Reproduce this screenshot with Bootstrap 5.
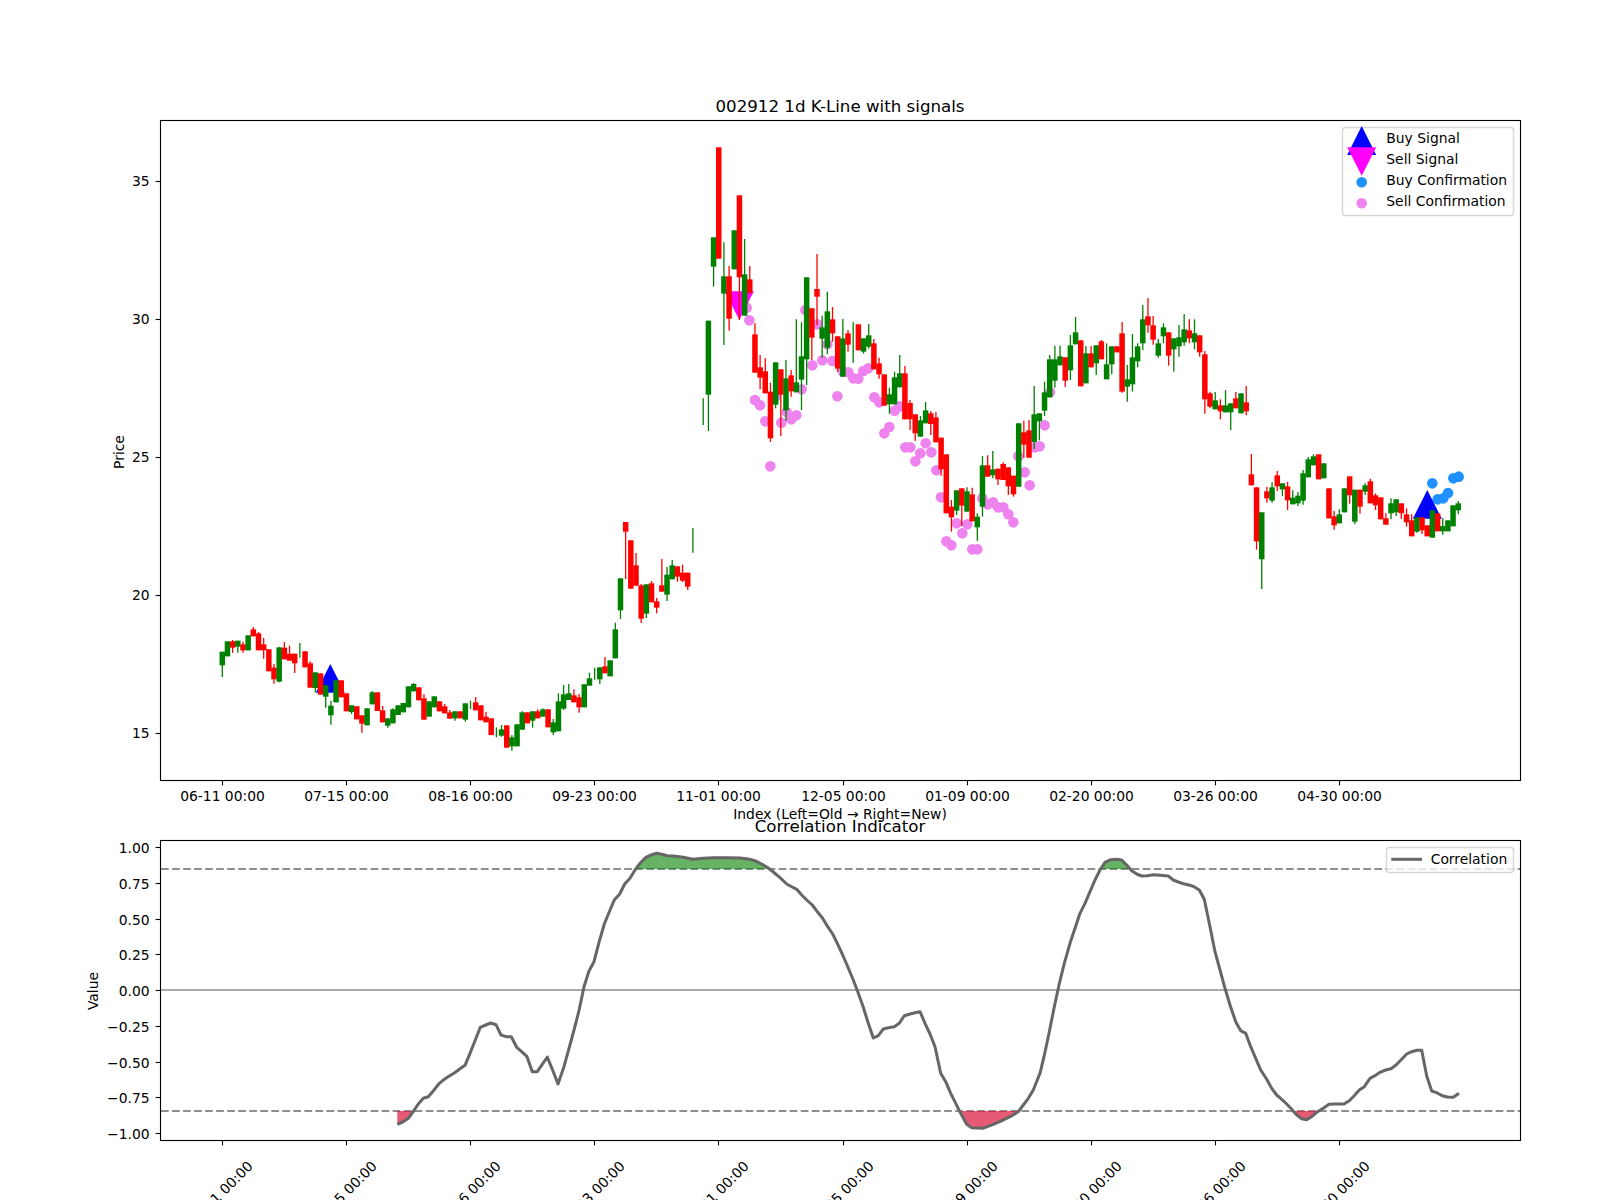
<!DOCTYPE html>
<html lang="en">
<head>
<meta charset="utf-8">
<title>002912 1d K-Line with signals</title>
<link href="https://cdn.jsdelivr.net/npm/bootstrap@5.3.0/dist/css/bootstrap.min.css" rel="stylesheet">
<style>
body { background: #fff; overflow: hidden; }
.chart-figure { width: 1600px; height: 1200px; }
.chart-figure text { font-family: "DejaVu Sans", sans-serif; font-size: 13.89px; fill: #000; }
.chart-figure text.plot-title { font-size: 16.67px; }
.ax-frame { fill: none; stroke: #000; stroke-width: 1.11; }
.ax-tick { stroke: #000; stroke-width: 1.11; }
.legend-box { fill: #fff; fill-opacity: .8; stroke: #ccc; stroke-opacity: .8; stroke-width: 1.39; }
.corr-line { fill: none; stroke: #666; stroke-width: 3; stroke-linejoin: round; }
.dash-line { stroke: #8e8e8e; stroke-width: 2.08; stroke-dasharray: 7.7 3.33; }
.zero-line { stroke: #aaa; stroke-width: 2.08; }
.tri-buy { fill: #00f; }
.tri-sell { fill: #f0f; }
.dot-buy { fill: #1e90ff; }
.dot-sell { fill: #ee82ee; }
.fill-up { fill: rgba(0,128,0,.6); }
.fill-down { fill: rgba(220,20,60,.7); }
</style>
</head>
<body>
<main class="container-fluid p-0">
<svg class="chart-figure d-block" viewBox="0 0 1600 1200" xmlns="http://www.w3.org/2000/svg">
  <defs>
    <clipPath id="clipUp"><rect x="160" y="840" width="1360" height="29"/></clipPath>
    <clipPath id="clipDown"><rect x="160" y="1111" width="1360" height="29"/></clipPath>
  </defs>
  <rect width="1600" height="1200" fill="#fff"/>

  <text class="plot-title" x="840" y="112" text-anchor="middle">002912 1d K-Line with signals</text>
  <g id="confirmDots"></g>
  <polygon class="tri-buy" points="330.3,664 315.8,692.7 344.8,692.7"/>
  <polygon class="tri-buy" points="1427.3,490 1412.8,518.7 1441.8,518.7"/>
  <polygon class="tri-sell" points="739.3,320 724.8,291.3 753.8,291.3"/>
  <g id="candles"></g>
  <rect class="ax-frame" x="160.5" y="120.5" width="1360" height="660"/>
  <g id="axisOne"></g>

  <rect class="legend-box" x="1342.5" y="127.5" width="171" height="88" rx="3"/>
  <polygon class="tri-buy" points="1361.7,126 1347.2,155 1376.2,155"/>
  <polygon class="tri-sell" points="1361.7,175.7 1347.2,147.3 1376.2,147.3"/>
  <circle class="dot-buy" cx="1361.7" cy="182.3" r="5.3"/>
  <circle class="dot-sell" cx="1361.7" cy="203.3" r="5.3"/>
  <text x="1386.3" y="143.3">Buy Signal</text>
  <text x="1386.3" y="164.3">Sell Signal</text>
  <text x="1386.3" y="185.3">Buy Confirmation</text>
  <text x="1386.3" y="206.3">Sell Confirmation</text>

  <text x="124" y="452" text-anchor="middle" transform="rotate(-90 124 452)">Price</text>
  <text x="840" y="819.3" text-anchor="middle">Index (Left=Old → Right=New)</text>
  <text class="plot-title" x="840" y="831.7" text-anchor="middle">Correlation Indicator</text>

  <line class="dash-line" x1="161" y1="869" x2="1520" y2="869"/>
  <line class="dash-line" x1="161" y1="1111" x2="1520" y2="1111"/>
  <line class="zero-line" x1="161" y1="990" x2="1520" y2="990"/>
  <polygon id="fillUp" class="fill-up" clip-path="url(#clipUp)"/>
  <polygon id="fillDown" class="fill-down" clip-path="url(#clipDown)"/>
  <polyline id="corrCurve" class="corr-line"/>
  <rect class="ax-frame" x="160.5" y="840.5" width="1360" height="300"/>
  <g id="axisTwo"></g>

  <rect class="legend-box" x="1386.5" y="847.5" width="127" height="25" rx="3"/>
  <line class="corr-line" x1="1391.3" y1="859.3" x2="1422" y2="859.3"/>
  <text x="1430.7" y="864.3">Correlation</text>
  <text x="98" y="991" text-anchor="middle" transform="rotate(-90 98 991)">Value</text>
</svg>
</main>
<script src="https://cdn.jsdelivr.net/npm/bootstrap@5.3.0/dist/js/bootstrap.bundle.min.js"></script>
<script>
(function () {
  var N = 'http://www.w3.org/2000/svg';
  function el(parent, tag, attrs, txt) {
    var e = document.createElementNS(N, tag);
    for (var k in attrs) e.setAttribute(k, attrs[k]);
    if (txt) e.textContent = txt;
    parent.appendChild(e);
    return e;
  }
  var G = '#008000', R = '#ff0000';
  var sets = [
   [150,500,[[216,G,455,496,0,531],[231,G,424,469],[246,R,424,443,420,459],[262,G,422,440,0,458],[278,R,433,451,425,458],[293,G,406,451],[309,R,388,409,381],[324,R,400,451,396],[340,R,433,451,414,476],[355,R,448,514],[371,R,503,538,492,551],[387,G,442,545,0,547],[402,R,443,478,426],[417,R,461,482,437],[432,R,461,490,0,519],[448,G,null,null,429,473],[464,R,454,502],[480,R,490,563,484],[495,G,517,564,0,577],[510,R,520,584],[525,G,556,590,0,623],[541,G,617,646,603,674],[557,G,541,607],[572,R,541,592],[588,R,580,634],[603,G,616,636,0,642],[618,R,619,658],[634,R,646,671,0,698],[650,G,625,676],[665,G,577,613,573],[681,R,577,633],[696,R,631,667,618],[711,G,655,677,0,683],[728,G,628,670,625],[743,G,616,645],[758,G,609,637],[774,G,559,622],[789,G,552,574,549],[804,R,562,601],[821,R,595,659,583],[836,G,604,650],[852,G,589,622],[867,R,604,634],[882,R,619,640,612],[897,R,637,656,630],[914,G,634,655,0,662],[929,R,634,655],[945,G,610,659,0,665],[961,G,null,null,602,627],[975,R,607,631,591],[990,R,616,661],[1006,R,650,667,636],[1022,R,655,705,0,706],[1039,G,null,null,682,712],[1052,G,688,707,675,710],[1068,R,676,743],[1086,G,712,739,705,752],[1101,G,673,739],[1115,G,637,689,634],[1131,R,637,670],[1146,G,634,662,0,683],[1160,R,634,655,628],[1178,G,628,650,625],[1192,R,628,682]]],
   [540,620,[[38,G,307,337,297,345],[53,G,244,334,220],[69,G,223,266,195,270],[85,G,220,240,192],[101,R,226,247,208],[116,R,232,262,222,278],[132,G,193,262],[148,G,175,197,158],[163,G,null,null,143,179],[177,G,142,178,0,192],[193,R,139,160,111],[209,G,121,169],[225,G,28,115,8]]],
   [500,480,[[360,G,295,391,0,417],[375,R,126,155,0,297],[390,R,181,326],[407,R,256,317,219],[423,R,316,416,312,429],[438,G,313,401,0,414],[453,R,310,367,303],[468,R,364,383,354,400],[485,R,316,335,237],[500,G,284,344,261,363],[516,G,256,298,240],[531,R,259,290,0,305],[546,R,278,302,254,306],[561,R,278,320,0,330],[579,G,null,null,144,218]]],
   [550,110,[[460,G,null,null,865,945],[474,G,632,854,0,963],[489,G,382,470,0,530],[504,R,112,446],[521,G,499,551,397,705],[536,R,499,626,468,662],[551,G,361,478],[567,R,256,502,0,630],[582,G,493,617,387],[597,R,508,549,468],[615,R,673,788,640],[631,R,772,803,735,838],[646,R,784,850,745],[660,R,845,985,818,996],[675,G,757,884,0,895],[692,R,778,854,0,978],[708,G,805,901,750,932],[723,R,796,844,780,860],[738,G,817,847,628],[753,G,739,809,637,900],[768,G,502,748,0,825],[786,R,595,683,0,750],[802,R,537,560,432,645],[816,G,652,686,617,743],[831,G,604,713,545,732],[846,R,628,670,591,695],[861,R,679,776,0,785],[878,G,685,800,627],[894,R,670,704,660,725],[910,G,null,null,636,758],[923,R,643,721],[938,G,685,725,0,731],[954,G,676,710,642,716],[971,R,700,778,687],[987,R,760,793,743,806],[1002,R,793,887],[1018,G,853,883,833,911],[1032,G,802,883,785],[1047,G,790,832,735]]],
   [720,280,[[555,R,280,418,258],[570,R,369,418,360,450],[585,R,403,460,0,483],[600,G,421,470,408],[615,G,391,430,366],[633,R,400,432,393,465],[647,R,412,487,396],[662,R,473,568,0,587],[678,R,523,700],[693,R,680,712,660,755],[708,G,631,692,0,705],[726,R,625,677,0,738],[740,G,634,695,622],[756,R,643,724,623],[771,G,710,742,700,782],[786,G,556,680,528,710],[801,R,556,590,526],[819,G,568,586,513,595],[834,R,566,598,0,615],[849,R,552,600,547],[864,R,562,619,0,645],[879,R,587,643,0,650],[894,G,430,620],[911,R,457,494,422,533],[926,R,451,533,420],[941,G,403,486,318,507],[957,G,400,424,0,481],[973,G,337,392,305,408],[990,G,238,352,225],[1005,G,238,302,197,323],[1020,G,229,256,197],[1035,R,232,302,0,321],[1050,G,196,271,165,300],[1065,G,157,193,111],[1082,R,181,319],[1098,G,220,310,198],[1113,R,220,262,198],[1128,G,196,250,0,285],[1143,R,184,238,180],[1159,G,253,298,190],[1174,G,199,253,0,283]]],
   [1100,110,[[50,R,709,727],[66,R,670,845,636,848],[80,G,808,830,765,875],[95,G,742,823,672,845],[110,G,709,754,700,772],[129,G,628,700,585,720],[144,R,619,646,564,668],[159,R,646,689,618,704],[174,G,700,737,686,743],[189,G,652,679,640,700],[204,R,667,737,0,767],[222,G,685,718,0,785],[237,G,682,709,645,740],[252,G,658,697,612,707],[267,R,661,685,628,700],[282,G,670,697,628,718],[300,R,676,727,0,740],[315,R,733,868,723,911],[330,R,850,890,845,895],[345,G,871,898,846],[360,R,886,904,868,928],[375,G,886,907,840],[393,G,880,907,0,960],[408,R,865,895,846],[423,G,850,910],[438,R,877,904,828,916]]],
   [1200,430,[[153,R,133,166,72],[168,R,172,334,0,359],[186,G,247,388,0,477],[201,R,184,205,170,218],[216,G,172,212,157,218],[231,R,136,169,123,183],[246,G,160,178,0,198],[261,R,169,211,156,240],[278,G,203,223,181],[294,G,197,220,186,228],[309,G,130,212,120,224],[324,G,88,142,81],[339,G,79,106,73],[357,R,73,148],[372,G,100,145],[387,R,175,265],[402,R,259,286,243,299],[417,G,253,280,238],[432,G,175,247],[450,R,139,196,0,221],[465,G,179,275,0,282],[480,R,179,230,0,251],[495,G,166,185,160,195],[510,R,154,220,146],[525,R,196,226,190,240],[543,R,202,268],[558,R,265,284,250],[573,G,220,250,205,268],[588,G,208,247,0,258],[603,R,220,250,0,267],[618,R,253,277,235,290],[636,R,271,319,253],[651,G,262,305,0,308],[666,R,262,301,0,312],[681,R,286,319],[696,G,241,323],[711,R,250,304],[729,G,288,304,265,314],[744,G,271,304],[759,G,226,289],[774,G,220,241,213,253]]]
  ];
  var STEP = 5.1713;
  var cg = document.getElementById('candles');
  sets.forEach(function (s) {
    s[2].forEach(function (b) {
      var rx = s[0] + b[0] / 3;
      var i = Math.round((rx - 222.3) / STEP);
      var x = 222.3 + i * STEP;
      function y(v) { return s[1] + v / 3; }
      var hasBody = b[2] !== null;
      var wt = b[4] || b[2], wb = b[5] || b[3];
      el(cg, 'line', { x1: x, x2: x, y1: y(wt), y2: y(wb), stroke: b[1], 'stroke-width': 1.3 });
      if (hasBody) el(cg, 'rect', { x: x - 2.75, width: 5.5, y: y(b[2]), height: (b[3] - b[2]) / 3, fill: b[1] });
    });
  });

  var dg = document.getElementById('confirmDots');
  [[88,121],[80,83],[105,360],[120,376],[136,424],[151,559],[168,349],[184,428],[200,396],[214,418],[229,406],[245,328],[256,90],[277,256],[292,133],[307,241],[322,193],[337,243],[352,349],[369,275],[385,277],[400,295],[415,296],[430,273],[445,265],[463,352],[478,367],[493,460],[508,441],[524,392],[539,379],[556,502],[571,502],[586,544],[601,520],[617,490],[634,517],[649,571],[663,652],[679,784],[694,796],[710,730],[727,760],[742,733],[757,808],[772,808],[787,655],[803,673],[819,667],[834,682],[850,682],[865,703],[880,727],[895,529],[914,577],[929,616],[944,502],[959,499],[974,436],[990,337]].forEach(function (p) {
    el(dg, 'circle', { 'class': 'dot-sell', cx: 720 + p[0] / 3, cy: 280 + p[1] / 3, r: 5.3 });
  });
  [[697,160],[713,208],[730,205],[744,189],[760,145],[776,140]].forEach(function (p) {
    el(dg, 'circle', { 'class': 'dot-buy', cx: 1200 + p[0] / 3, cy: 430 + p[1] / 3, r: 5.3 });
  });

  var pts = [];
  function add(ox, oy, arr) { arr.forEach(function (p) { pts.push([ox + p[0] / 3, oy + p[1] / 3]); }); }
  add(80, 820, [[952,913],[968,906],[985,895],[1000,874],[1015,852],[1030,835],[1045,830],[1062,810],[1078,790],[1093,778],[1108,768],[1124,758],[1140,746],[1155,736],[1170,700],[1186,660],[1201,622],[1217,615],[1232,609],[1248,614],[1263,645],[1278,650],[1294,650],[1310,682],[1325,695],[1341,710],[1357,755],[1372,755],[1402,711],[1420,755],[1434,792]]);
  add(560, 770, [[12,890],[27,835],[42,780],[57,722],[72,650],[87,603],[102,575],[117,517],[133,462],[148,425],[163,390],[179,372],[194,342],[210,325],[225,300],[240,280],[258,262],[275,254],[290,250],[305,253],[322,257],[340,258],[370,262],[398,268],[430,265],[460,263],[500,263],[540,264],[565,267],[585,272],[605,282],[625,294],[640,306],[660,323],[680,342],[695,350],[710,358],[725,375],[740,390],[757,405],[772,425],[787,443],[803,470],[818,492],[832,520],[848,555],[863,590],[880,630],[895,670],[910,712],[925,760],[940,804],[955,797],[970,777],[985,773],[1003,770],[1018,760],[1033,737],[1050,732],[1065,728],[1080,725],[1095,760],[1110,792],[1125,830],[1142,910],[1157,935],[1172,970],[1187,1000],[1202,1030],[1220,1063],[1235,1073],[1268,1075],[1300,1063],[1330,1050],[1350,1040],[1375,1025],[1390,1005],[1405,985],[1420,960]]);
  add(1040, 820, [[0,760],[12,710],[27,640],[42,565],[57,495],[73,430],[90,370],[105,325],[120,280],[135,250],[150,215],[165,180],[180,150],[195,127],[212,119],[230,118],[245,120],[260,135],[275,152],[290,162],[305,168],[322,167],[340,164],[360,166],[385,168],[400,180],[415,186],[430,191],[447,195],[462,200],[478,210],[493,238],[510,320],[525,395],[540,450],[555,505],[570,555],[587,605],[602,632],[617,640],[632,680],[647,715],[662,750],[680,778],[695,805],[710,825],[725,838],[740,852],[755,868],[770,885],[785,896],[800,899],[815,890],[830,877],[850,865],[867,853],[882,852],[912,852],[928,842],[942,828],[958,810],[973,800],[990,775],[1005,767],[1020,757],[1037,750],[1053,746],[1068,735],[1085,718],[1100,702],[1115,695],[1130,691],[1145,691],[1160,768],[1175,813],[1190,818],[1207,827],[1222,831],[1240,832],[1257,820]]);
  var str = pts.map(function (p) { return p[0].toFixed(1) + ',' + p[1].toFixed(1); }).join(' ');
  document.getElementById('corrCurve').setAttribute('points', str);
  var fx = pts[0][0], lx = pts[pts.length - 1][0];
  document.getElementById('fillUp').setAttribute('points', str + ' ' + lx + ',869 ' + fx + ',869');
  document.getElementById('fillDown').setAttribute('points', str + ' ' + lx + ',1111 ' + fx + ',1111');

  var ticks = [[222.5,'06-11 00:00'],[346.5,'07-15 00:00'],[470.5,'08-16 00:00'],[594.5,'09-23 00:00'],[718.5,'11-01 00:00'],[843.5,'12-05 00:00'],[967.5,'01-09 00:00'],[1091.5,'02-20 00:00'],[1215.5,'03-26 00:00'],[1339.5,'04-30 00:00']];
  var a1 = document.getElementById('axisOne'), a2 = document.getElementById('axisTwo');
  ticks.forEach(function (t) {
    el(a1, 'line', { 'class': 'ax-tick', x1: t[0], x2: t[0], y1: 781, y2: 785.4 });
    el(a1, 'text', { x: t[0], y: 801, 'text-anchor': 'middle' }, t[1]);
    el(a2, 'line', { 'class': 'ax-tick', x1: t[0], x2: t[0], y1: 1141, y2: 1145.4 });
    var lx2 = t[0] - 2.2;
    el(a2, 'text', { x: lx2, y: 1198.5, 'text-anchor': 'middle', transform: 'rotate(-45 ' + lx2 + ' 1193.5)' }, t[1]);
  });
  [[35,181.5],[30,319.5],[25,457.5],[20,595.5],[15,733.5]].forEach(function (t) {
    el(a1, 'line', { 'class': 'ax-tick', x1: 155.6, x2: 160, y1: t[1], y2: t[1] });
    el(a1, 'text', { x: 149.6, y: t[1] + 4.6, 'text-anchor': 'end' }, String(t[0]));
  });
  ['1.00','0.75','0.50','0.25','0.00','\u22120.25','\u22120.50','\u22120.75','\u22121.00'].forEach(function (s, k) {
    var y = Math.round(847 + k * 35.75) + 0.5;
    el(a2, 'line', { 'class': 'ax-tick', x1: 155.6, x2: 160, y1: y, y2: y });
    el(a2, 'text', { x: 149.6, y: y + 5.3, 'text-anchor': 'end' }, s);
  });
})();
</script>
</body>
</html>
